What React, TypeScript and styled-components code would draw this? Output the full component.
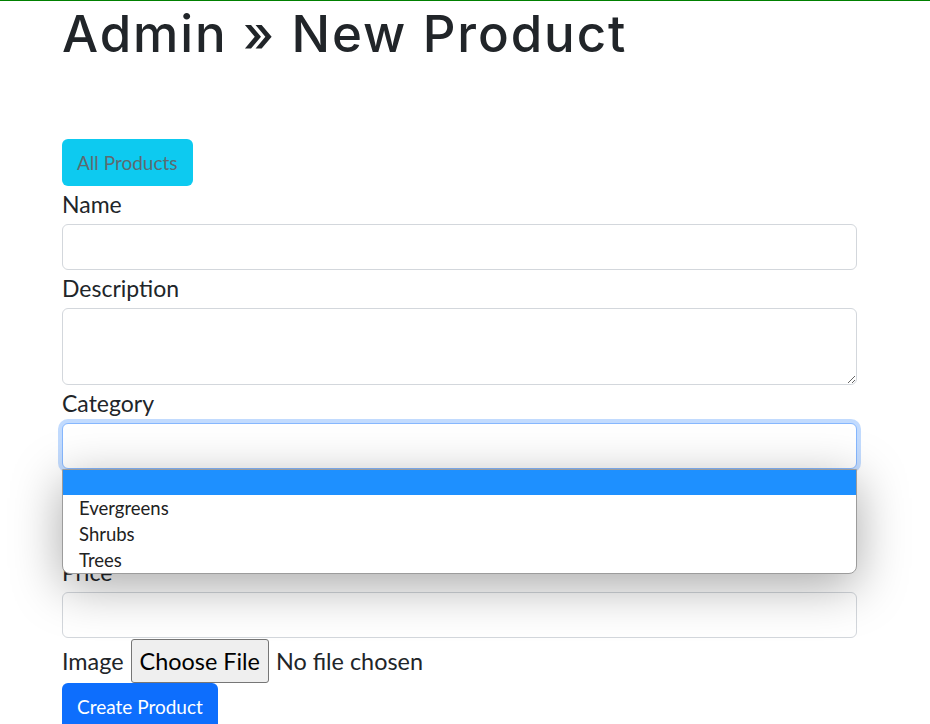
import React from "react";
import styled, { createGlobalStyle } from "styled-components";

const GlobalStyle = createGlobalStyle`
  html, body { margin: 0; padding: 0; background: #ffffff; }
  body {
    font-family: Lato, "Noto Sans", sans-serif;
    color: #212529;
    overflow: hidden;
  }
  * { box-sizing: border-box; }
`;

const Page = styled.div`
  border-top: 1px solid #008000;
  min-height: 724px;
  padding: 0 73px 0 62px;
`;

const Title = styled.h1`
  margin: 2px 0 0;
  font-family: Inter, "Noto Sans", sans-serif;
  font-weight: 500;
  font-size: 51px;
  line-height: 61px;
  letter-spacing: 1.9px;
  color: #212529;
`;

const InfoButton = styled.button`
  display: block;
  margin-top: 75px;
  height: 47px;
  padding: 0 15px;
  border: none;
  border-radius: 6px;
  background: #0dcaf0;
  color: #5d6a70;
  font-family: Lato, "Noto Sans", sans-serif;
  font-size: 19px;
`;

const Form = styled.form`
  display: flex;
  flex-direction: column;
`;

const Group = styled.div<{ $gapAfter?: number }>`
  position: relative;
  display: flex;
  flex-direction: column;
  margin-bottom: ${(p) => p.$gapAfter ?? 0}px;
`;

const Label = styled.label`
  display: block;
  font-size: 23px;
  line-height: 36px;
  margin-bottom: 2px;
`;

const TextInput = styled.div<{ $focused?: boolean }>`
  height: 46px;
  border: 1px solid ${(p) => (p.$focused ? "#86b7fe" : "#d3d7dc")};
  border-radius: 6px;
  background: #ffffff;
  box-shadow: ${(p) => (p.$focused ? "0 0 0 4px rgba(13,110,253,0.25)" : "none")};
`;

const TextArea = styled.textarea`
  display: block;
  width: 100%;
  height: 77px;
  border: 1px solid #d3d7dc;
  border-radius: 6px;
  background: #ffffff;
  resize: vertical;
  font-family: inherit;
`;

const Dropdown = styled.ul`
  position: absolute;
  top: 100%;
  left: 0;
  right: 0;
  margin: 0;
  padding: 0;
  list-style: none;
  background: #ffffff;
  border: 1px solid #9c9c9c;
  border-radius: 0 0 8px 8px;
  box-shadow: 0 12px 50px rgba(0, 0, 0, 0.34);
  z-index: 10;
`;

const Option = styled.li<{ $active?: boolean }>`
  height: ${(p) => (p.$active ? 25 : 26)}px;
  line-height: 26px;
  padding-left: 16px;
  font-size: 18.5px;
  color: #222222;
  background: ${(p) => (p.$active ? "#1e90ff" : "transparent")};
`;

const FileRow = styled.div`
  display: flex;
  align-items: center;
  height: 45px;
  padding-top: 1px;
  font-size: 23.4px;
`;

const FileButton = styled.span`
  display: inline-flex;
  align-items: center;
  height: 44px;
  margin-left: 7px;
  padding: 0 8px;
  border: 1px solid #767676;
  border-radius: 3px;
  background: #efefef;
  color: #000000;
`;

const FileStatus = styled.span`
  margin-left: 7px;
`;

const PrimaryButton = styled.button`
  align-self: flex-start;
  height: 47px;
  padding: 0 15px;
  border: none;
  border-radius: 6px;
  background: #0d6efd;
  color: #ffffff;
  font-family: Lato, "Noto Sans", sans-serif;
  font-size: 19px;
`;

export default function App() {
  const options = ["", "Evergreens", "Shrubs", "Trees"];
  return (
    <>
      <GlobalStyle />
      <Page>
        <Title>Admin » New Product</Title>
        <InfoButton type="button">All Products</InfoButton>
        <Form>
          <Group>
            <Label>Name</Label>
            <TextInput />
          </Group>
          <Group>
            <Label>Description</Label>
            <TextArea />
          </Group>
          <Group $gapAfter={85}>
            <Label>Category</Label>
            <TextInput $focused />
            <Dropdown>
              {options.map((o, i) => (
                <Option key={i} $active={i === 0}>
                  {o}
                </Option>
              ))}
            </Dropdown>
          </Group>
          <Group>
            <Label>Price</Label>
            <TextInput />
          </Group>
          <FileRow>
            <span>Image</span>
            <FileButton>Choose File</FileButton>
            <FileStatus>No file chosen</FileStatus>
          </FileRow>
          <PrimaryButton type="button">Create Product</PrimaryButton>
        </Form>
      </Page>
    </>
  );
}
